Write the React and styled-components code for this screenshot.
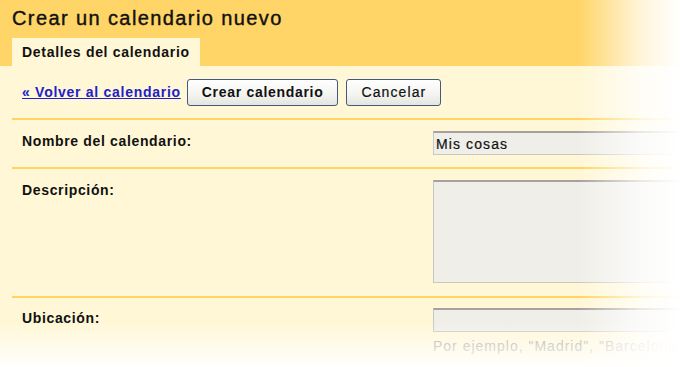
import React from "react";
import styled, { createGlobalStyle } from "styled-components";

const GlobalStyle = createGlobalStyle`
  html, body {
    margin: 0;
    padding: 0;
    background: #ffffff;
  }
  body {
    font-family: "Liberation Sans", Arial, sans-serif;
  }
`;

const Page = styled.div`
  position: relative;
  width: 680px;
  height: 367px;
  overflow: hidden;
  background: #fff7d6;
`;

const Header = styled.div`
  background: #ffd567;
`;

const Title = styled.h1`
  margin: 0;
  height: 38px;
  box-sizing: border-box;
  padding: 6px 0 0 12px;
  font-size: 20px;
  line-height: 24px;
  font-weight: normal;
  letter-spacing: 1.4px;
  color: #111;
  -webkit-text-stroke: 0.4px #111;
  white-space: nowrap;
`;

const Tabs = styled.div`
  display: flex;
  padding-left: 12px;
`;

const Tab = styled.div`
  width: 188px;
  height: 28px;
  box-sizing: border-box;
  padding-left: 10px;
  background: #fff7d6;
  font-size: 14px;
  line-height: 28px;
  font-weight: bold;
  letter-spacing: 0.7px;
  color: #111;
`;

const Content = styled.div`
  margin-left: 12px;
`;

const Toolbar = styled.div`
  display: flex;
  align-items: center;
  height: 52px;
  padding-left: 10px;
  gap: 6px;
`;

const BackLink = styled.a`
  color: #2121c9;
  font-size: 14px;
  font-weight: bold;
  letter-spacing: 0.72px;
  text-decoration: underline;
  cursor: pointer;
`;

const Button = styled.button`
  height: 27px;
  box-sizing: border-box;
  padding: 0 14px;
  margin-left: ${({ $gap }) => $gap || 0}px;
  border: 1.5px solid #46597a;
  border-radius: 3px;
  background: linear-gradient(#ffffff, #f3f3f0 60%, #e4e4e0);
  font-family: "Liberation Sans", Arial, sans-serif;
  font-size: 14px;
  font-weight: ${({ $bold }) => ($bold ? "bold" : "normal")};
  letter-spacing: ${({ $bold }) => ($bold ? "0.7px" : "1.1px")};
  -webkit-text-stroke: ${({ $bold }) => ($bold ? "0" : "0.2px #111")};
  color: #111;
  cursor: pointer;
`;

const Row = styled.div`
  display: grid;
  grid-template-columns: 411px 1fr;
  border-top: 2px solid #ffd45f;
  padding: ${({ $top }) => $top}px 0 ${({ $bottom }) => $bottom}px 10px;
`;

const Label = styled.div`
  margin-top: 2px;
  font-size: 14px;
  line-height: 16px;
  font-weight: bold;
  letter-spacing: 0.65px;
  color: #111;
`;

const Field = styled.div`
  display: flex;
  flex-direction: column;
`;

const TextInput = styled.input`
  width: 300px;
  height: 24px;
  box-sizing: border-box;
  padding: 0 2px;
  border: 1px solid #c9c8c0;
  border-top: 2px solid #a3a29c;
  background: #efeee8;
  font-family: "Liberation Sans", Arial, sans-serif;
  font-size: 14px;
  letter-spacing: 1.1px;
  -webkit-text-stroke: 0.2px #111;
  color: #111;
  outline: none;
`;

const TextArea = styled.textarea`
  width: 300px;
  height: 103px;
  box-sizing: border-box;
  border: 1px solid #c9c8c0;
  border-top: 2px solid #a3a29c;
  background: #efeee8;
  resize: none;
  outline: none;
`;

const Hint = styled.div`
  margin-top: 6px;
  font-size: 14px;
  line-height: 16px;
  letter-spacing: 1px;
  color: #a8a69c;
  white-space: nowrap;
`;

const FadeRight = styled.div`
  position: absolute;
  inset: 0;
  pointer-events: none;
  background: linear-gradient(
    to right,
    rgba(255, 255, 255, 0) 0,
    rgba(255, 255, 255, 0) 578px,
    rgba(255, 255, 255, 0.75) 640px,
    rgba(255, 255, 255, 1) 680px
  );
`;

const FadeBottom = styled.div`
  position: absolute;
  inset: 0;
  pointer-events: none;
  background: linear-gradient(
    to bottom,
    rgba(255, 255, 255, 0) 0,
    rgba(255, 255, 255, 0) 322px,
    rgba(255, 255, 255, 0.95) 367px
  );
`;

export default function App() {
  return (
    <>
      <GlobalStyle />
      <Page>
        <Header>
          <Title>Crear un calendario nuevo</Title>
          <Tabs>
            <Tab>Detalles del calendario</Tab>
          </Tabs>
        </Header>
        <Content>
          <Toolbar>
            <BackLink>« Volver al calendario</BackLink>
            <Button $bold>Crear calendario</Button>
            <Button $gap={2}>Cancelar</Button>
          </Toolbar>
          <Row $top={11} $bottom={12}>
            <Label>Nombre del calendario:</Label>
            <Field>
              <TextInput readOnly value="Mis cosas" />
            </Field>
          </Row>
          <Row $top={11} $bottom={13}>
            <Label>Descripción:</Label>
            <Field>
              <TextArea readOnly />
            </Field>
          </Row>
          <Row $top={10} $bottom={12}>
            <Label>Ubicación:</Label>
            <Field>
              <TextInput readOnly value="" />
              <Hint>Por ejemplo, "Madrid", "Barcelona"</Hint>
            </Field>
          </Row>
        </Content>
        <FadeRight />
        <FadeBottom />
      </Page>
    </>
  );
}
